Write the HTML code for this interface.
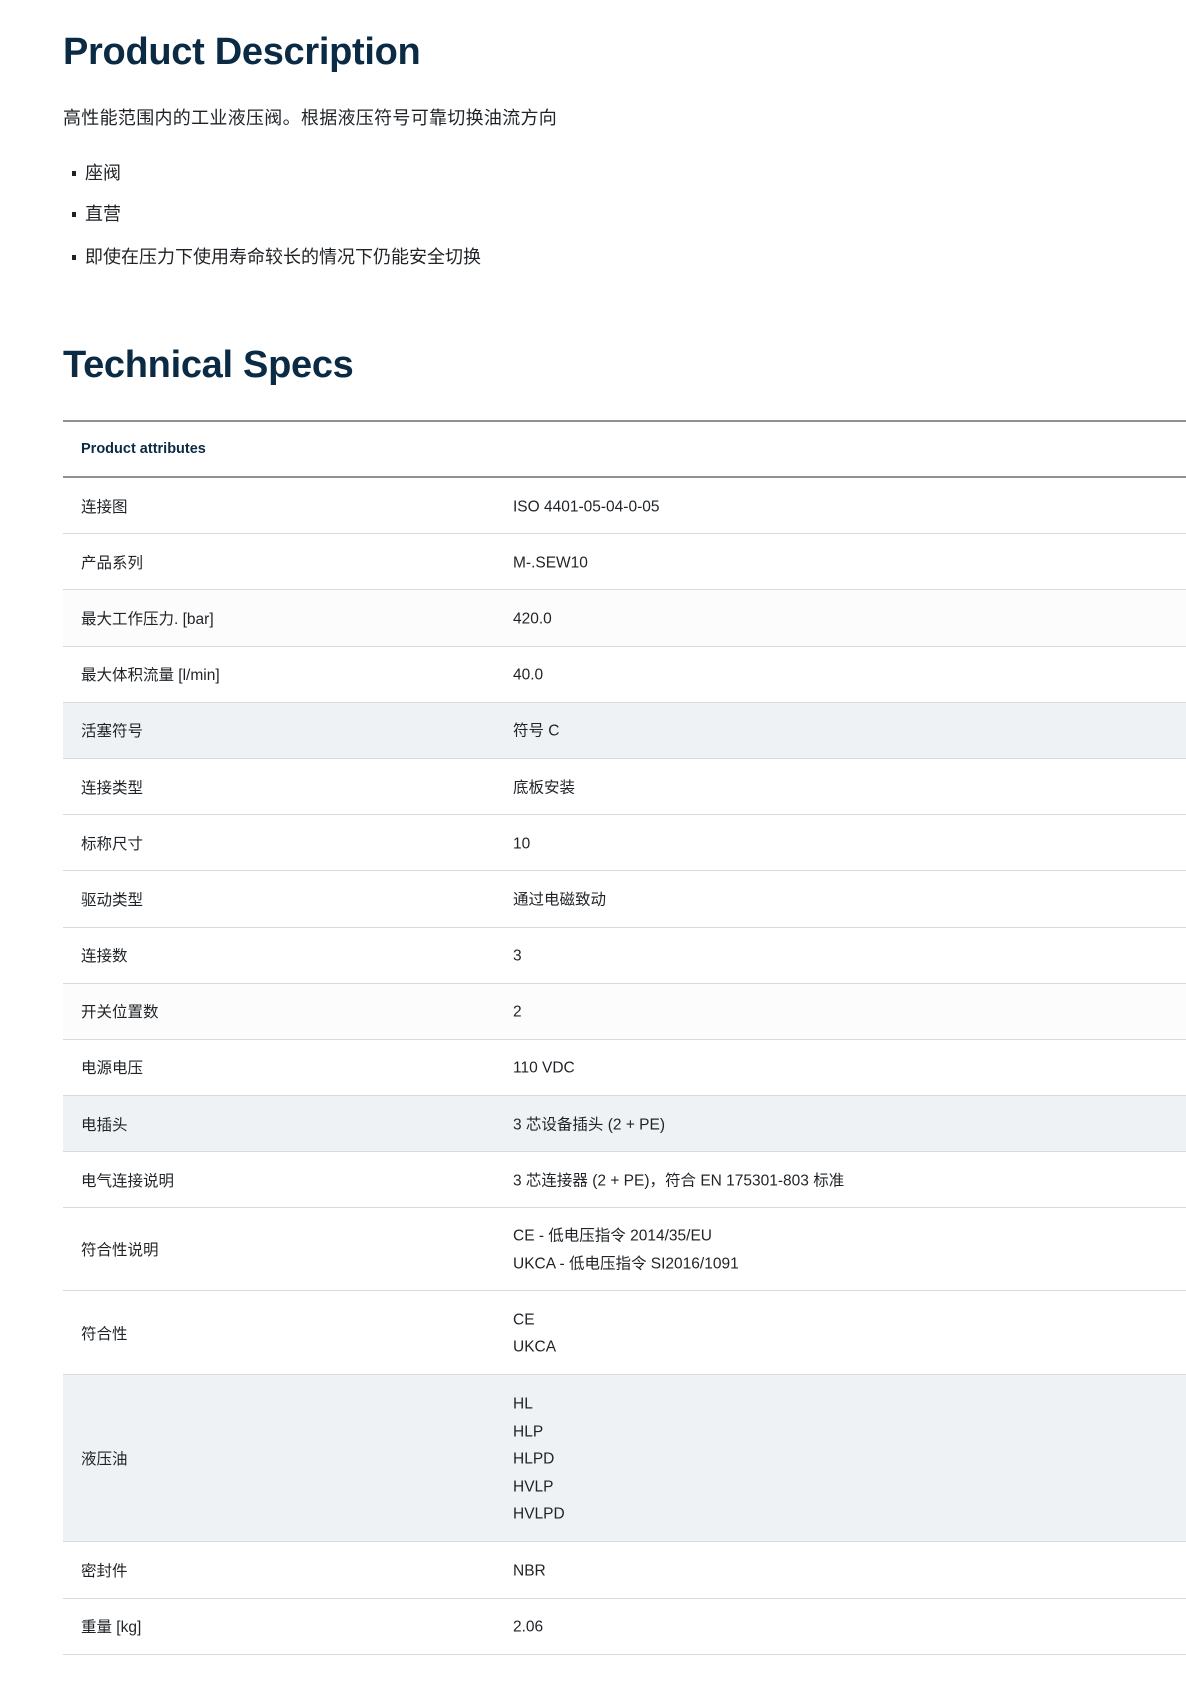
<!DOCTYPE html>
<html><head><meta charset="utf-8"><style>
*{margin:0;padding:0;box-sizing:border-box}
body{width:1186px;height:1698px;background:#fff;font-family:"Liberation Sans","Noto Sans CJK SC",sans-serif;color:#1f2327;position:relative;overflow:hidden}
h2{position:absolute;left:63px;font-size:38px;font-weight:bold;color:#0b2a44;line-height:1;letter-spacing:-0.3px}
.p{position:absolute;left:63px;font-size:18px;line-height:24px;letter-spacing:0.3px}
.b{position:absolute;left:72px;font-size:18px;line-height:24px;padding-left:13px}
.b:before{content:"";position:absolute;left:0;top:10px;width:4px;height:5px;background:#1f2327}
.t{position:absolute;left:63px;top:420px;right:0;border-top:2px solid #8c9196}
.r{position:relative;border-bottom:1px solid #d8dadc;font-size:15.5px;height:56.2px}
.r .l{position:absolute;left:18px;top:50%;transform:translateY(-50%)}
.r .v{position:absolute;left:450px;top:calc(50% + 1px);transform:translateY(-50%);line-height:27.5px}
.h{border-bottom:2px solid #8c9196;font-weight:bold;font-size:14.5px;color:#0b2a44}
.g{background:#eff2f5}
.s{background:#fcfcfc}
</style></head><body>
<h2 style="top:33px">Product Description</h2>
<div class="p" style="top:106px">高性能范围内的工业液压阀。根据液压符号可靠切换油流方向</div>
<div class="b" style="top:161px">座阀</div>
<div class="b" style="top:202px">直营</div>
<div class="b" style="top:245px">即使在压力下使用寿命较长的情况下仍能安全切换</div>
<h2 style="top:346px">Technical Specs</h2>
<div class="t">
<div class="r h" style="height:56px"><span class="l">Product attributes</span></div>
<div class="r"><span class="l">连接图</span><span class="v">ISO 4401-05-04-0-05</span></div>
<div class="r"><span class="l">产品系列</span><span class="v">M-.SEW10</span></div>
<div class="r s"><span class="l">最大工作压力. [bar]</span><span class="v">420.0</span></div>
<div class="r"><span class="l">最大体积流量 [l/min]</span><span class="v">40.0</span></div>
<div class="r g"><span class="l">活塞符号</span><span class="v">符号 C</span></div>
<div class="r"><span class="l">连接类型</span><span class="v">底板安装</span></div>
<div class="r"><span class="l">标称尺寸</span><span class="v">10</span></div>
<div class="r"><span class="l">驱动类型</span><span class="v">通过电磁致动</span></div>
<div class="r"><span class="l">连接数</span><span class="v">3</span></div>
<div class="r s"><span class="l">开关位置数</span><span class="v">2</span></div>
<div class="r"><span class="l">电源电压</span><span class="v">110 VDC</span></div>
<div class="r g"><span class="l">电插头</span><span class="v">3 芯设备插头 (2 + PE)</span></div>
<div class="r"><span class="l">电气连接说明</span><span class="v">3 芯连接器 (2 + PE)，符合 EN 175301-803 标准</span></div>
<div class="r" style="height:83px"><span class="l">符合性说明</span><span class="v">CE - 低电压指令 2014/35/EU<br>UKCA - 低电压指令 SI2016/1091</span></div>
<div class="r" style="height:83.5px"><span class="l">符合性</span><span class="v">CE<br>UKCA</span></div>
<div class="r g" style="height:167.5px"><span class="l">液压油</span><span class="v">HL<br>HLP<br>HLPD<br>HVLP<br>HVLPD</span></div>
<div class="r"><span class="l">密封件</span><span class="v">NBR</span></div>
<div class="r"><span class="l">重量 [kg]</span><span class="v">2.06</span></div>
</div>
</body></html>
